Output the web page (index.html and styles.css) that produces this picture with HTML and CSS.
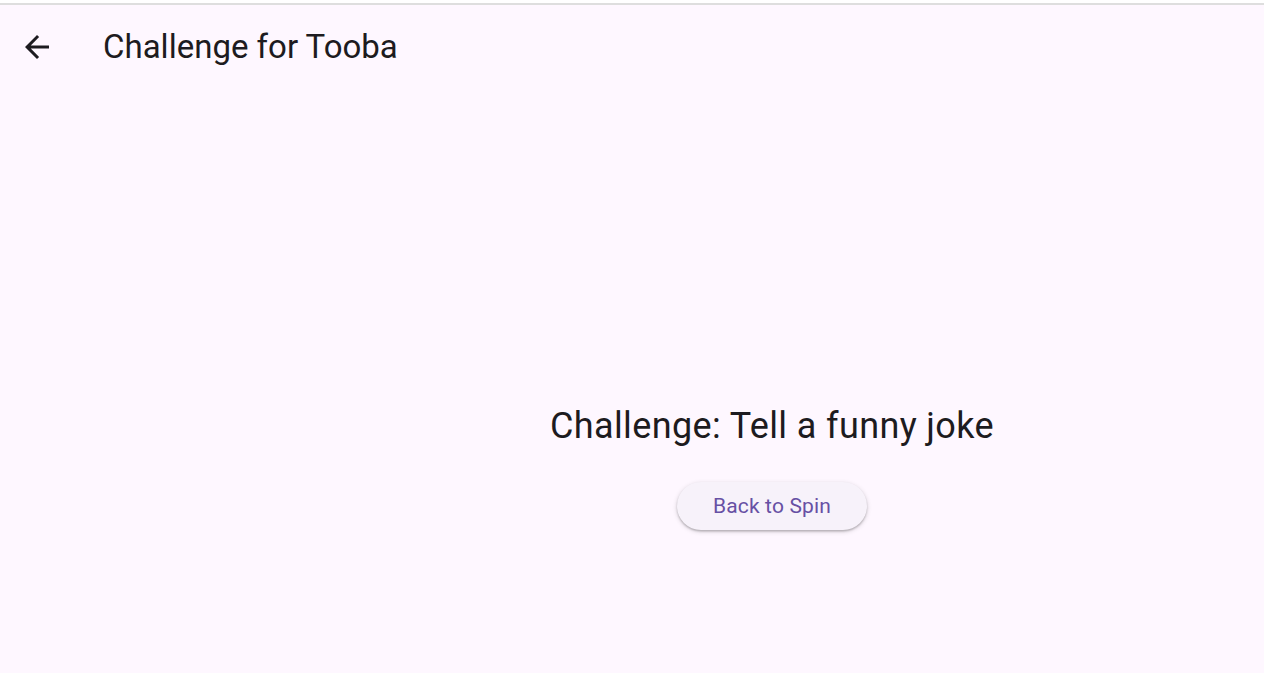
FILE: index.html
```html
<!DOCTYPE html>
<html lang="en">
<head>
<meta charset="utf-8">
<title>Challenge for Tooba</title>
<link rel="stylesheet" href="styles.css">
</head>
<body>
<div class="topline"></div>
<div class="app">
  <header class="appbar">
    <button class="back" aria-label="Back">
      <svg viewBox="0 0 24 24" width="36" height="36"><path d="M20 11H7.83l5.59-5.59L12 4l-8 8 8 8 1.41-1.41L7.83 13H20v-2z" fill="#1d1b20"/></svg>
    </button>
    <h1 class="title">Challenge for Tooba</h1>
  </header>
  <main class="content">
    <p class="challenge">Challenge: Tell a funny joke</p>
    <button class="spin">Back to Spin</button>
  </main>
</div>
</body>
</html>
```
FILE: styles.css
```css
html, body {
  margin: 0;
  padding: 0;
  background: #ffffff;
  overflow: hidden;
  height: 673px;
}
body {
  font-family: Roboto, "Noto Sans", sans-serif;
}
.topline {
  height: 2px;
  margin-top: 3px;
  background: #dedede;
}
.app {
  background: #fef7ff;
  height: 668px;
  display: flex;
  flex-direction: column;
}
.appbar {
  height: 84px;
  display: flex;
  align-items: center;
  padding-left: 19px;
}
.back {
  width: 36px;
  height: 36px;
  padding: 0;
  border: 0;
  background: transparent;
  display: flex;
  align-items: center;
  justify-content: center;
}
.title {
  margin: 0 0 0 48px;
  font-size: 33px;
  font-weight: 400;
  color: #1d1b20;
  line-height: 44px;
}
.content {
  display: flex;
  flex-direction: column;
  align-items: center;
  padding-left: 280px;
  padding-top: 313px;
}
.challenge {
  margin: 0;
  font-size: 36px;
  line-height: 48px;
  font-weight: 400;
  letter-spacing: 0.37px;
  color: #1d1b20;
}
.spin {
  margin-top: 32px;
  width: 190px;
  height: 48px;
  border: 0;
  border-radius: 24px;
  background: #f7f2fa;
  color: #6750a4;
  font-family: Roboto, "Noto Sans", sans-serif;
  font-size: 21px;
  font-weight: 400;
  letter-spacing: 0.15px;
  box-shadow: 0 1.5px 2px rgba(0, 0, 0, 0.22), 0 1.5px 4px 1px rgba(0, 0, 0, 0.1);
}
```
